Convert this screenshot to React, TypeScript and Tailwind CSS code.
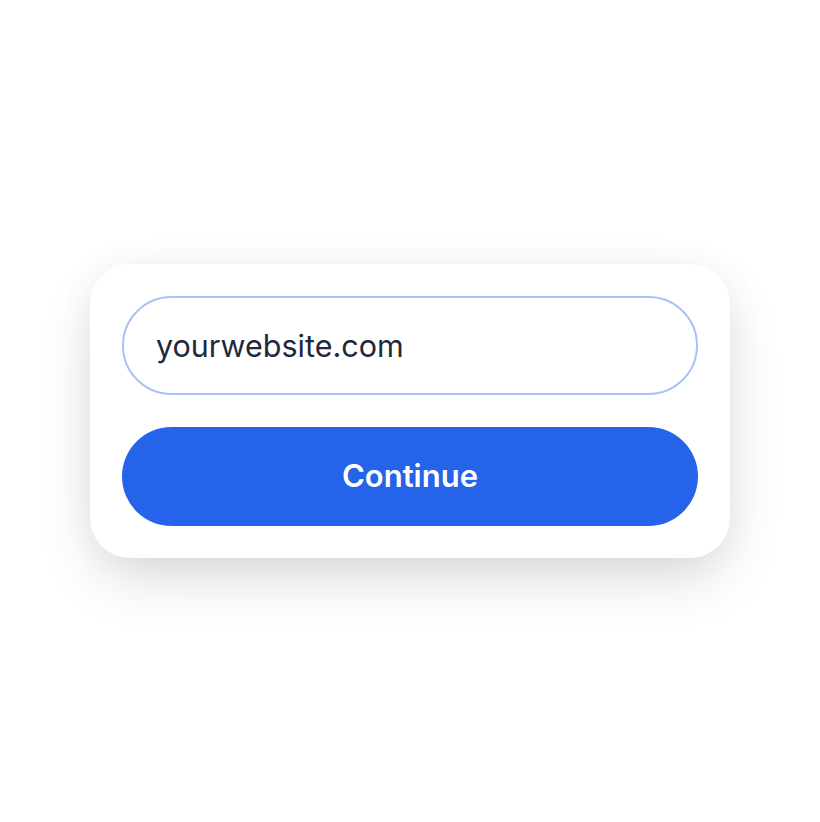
export default function App() {
  return (
    <div
      className="flex min-h-screen items-center justify-center bg-white"
      style={{ fontFamily: "Inter, 'Noto Sans', sans-serif" }}
    >
      <div className="flex w-[640px] flex-col gap-8 rounded-[40px] bg-white p-8 shadow-[0_24px_60px_-8px_rgba(0,0,0,0.16),0_0_40px_rgba(0,0,0,0.04)]">
        <input
          type="text"
          defaultValue="yourwebsite.com"
          className="h-[99px] w-full rounded-full border-2 border-[#a8c2f7] bg-white px-8 text-[30.5px] text-[#1e293b] focus:outline-none"
        />
        <button
          type="button"
          className="h-[99px] w-full rounded-full bg-[#2563eb] text-[31px] font-semibold text-white"
        >
          Continue
        </button>
      </div>
    </div>
  );
}
